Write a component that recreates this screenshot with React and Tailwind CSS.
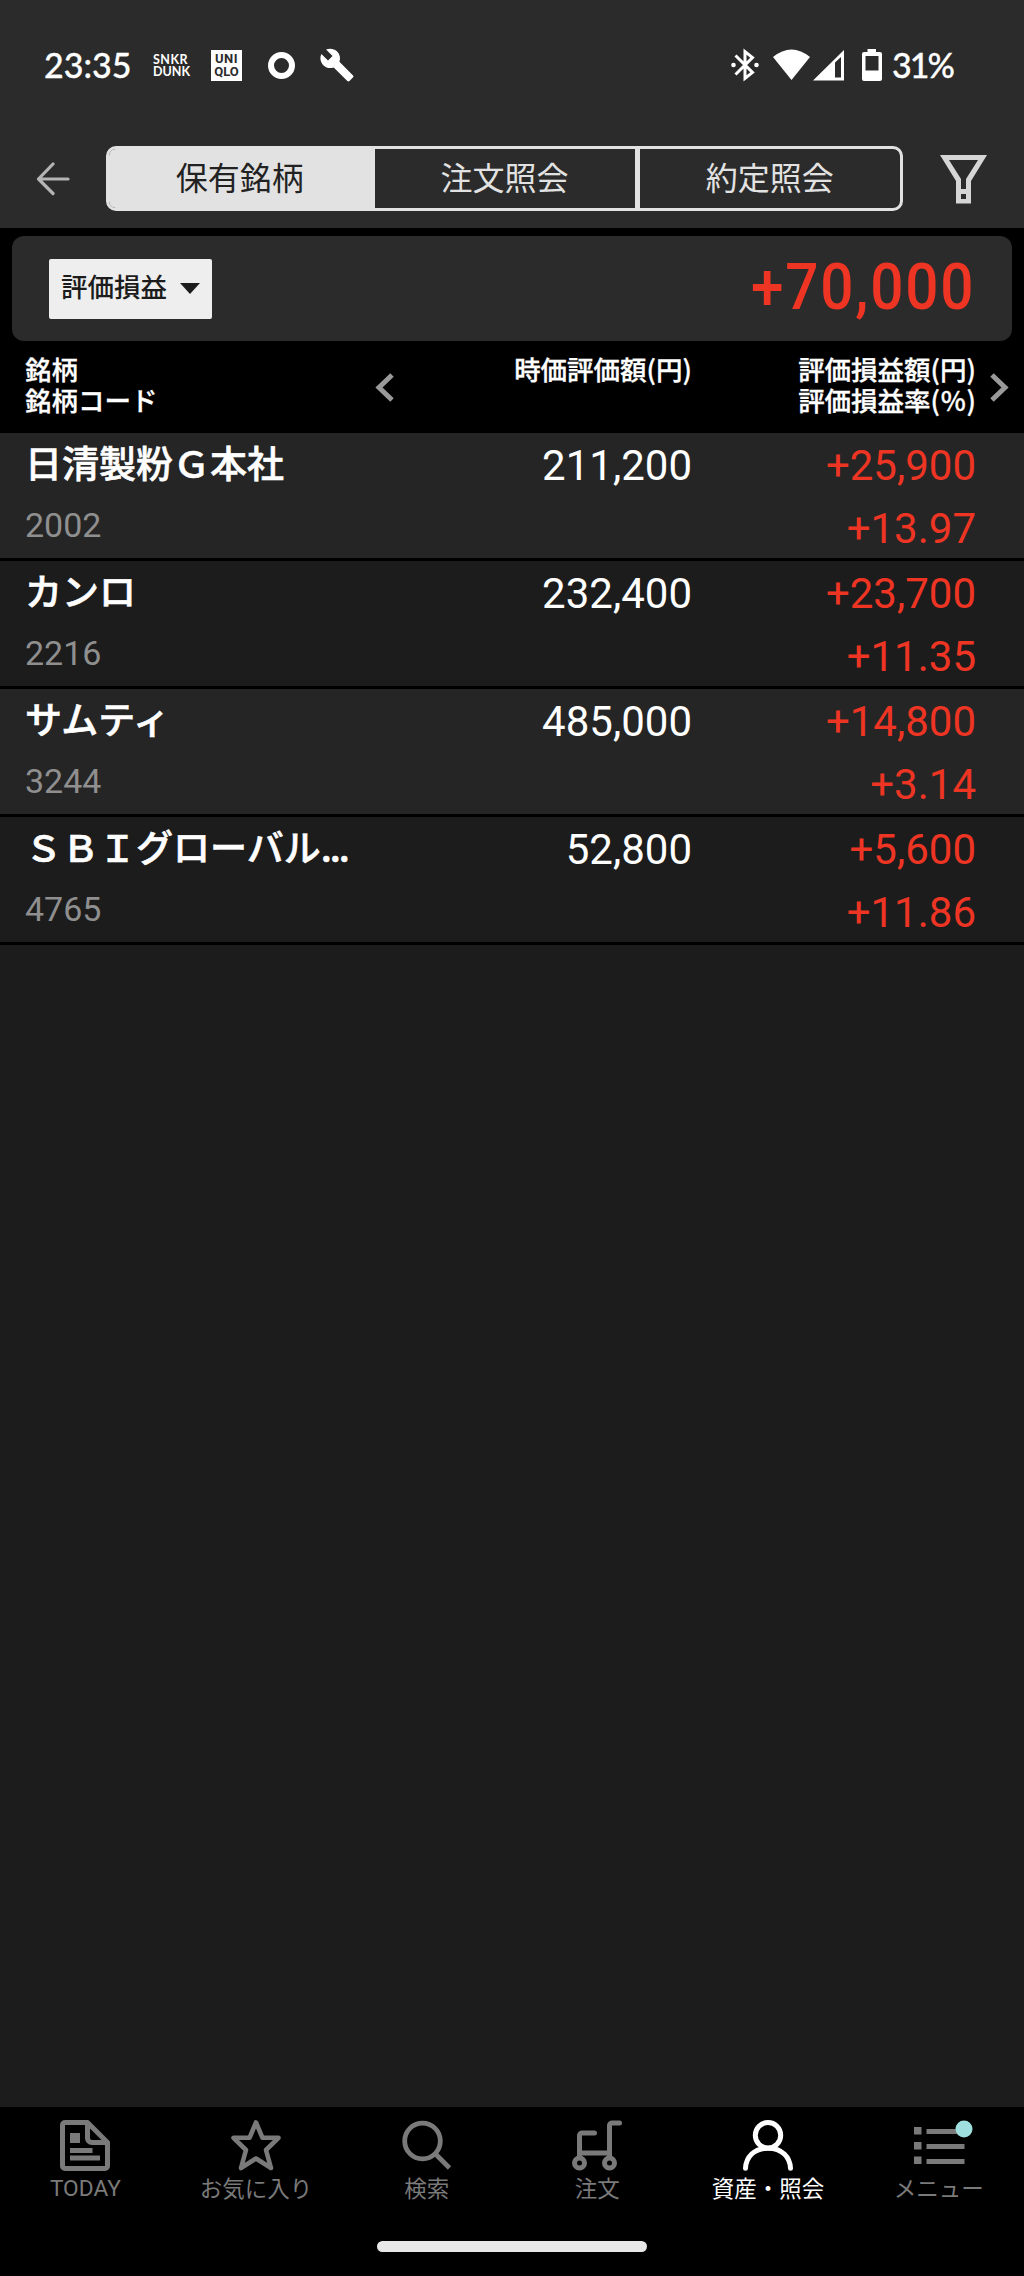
// App.jsx - 保有銘柄一覧
const holdings = [
  { name: "日清製粉Ｇ本社", code: "2002", value: "211,200", profit: "+25,900", rate: "+13.97" },
  { name: "カンロ", code: "2216", value: "232,400", profit: "+23,700", rate: "+11.35" },
  { name: "サムティ", code: "3244", value: "485,000", profit: "+14,800", rate: "+3.14" },
  { name: "ＳＢＩグローバル", more: true, code: "4765", value: "52,800", profit: "+5,600", rate: "+11.86" },
];

const tabs = [
  { label: "保有銘柄", className: "w-[265.5px] bg-[#e2e2e2] pr-1 text-[#222]" },
  { label: "注文照会", className: "w-[260px] text-[#e2e2e2]" },
  { label: "約定照会", className: "flex-1 border-l-[5px] border-[#e2e2e2] text-[#e2e2e2]" },
];

const TodayIcon = () => (
  <svg width="50" height="51" viewBox="0 0 50 51" fill="none" stroke="currentColor" strokeWidth="5" strokeLinejoin="round">
    <path d="M5 2.5H27.5L47.5 22.5V46A2.5 2.5 0 0 1 45 48.5H5A2.5 2.5 0 0 1 2.5 46V5A2.5 2.5 0 0 1 5 2.5Z" />
    <path d="M27.5 2.5V18A4.5 4.5 0 0 0 32 22.5H47.5" />
    <path d="M10 13h10v10H10zM10 28h22.5v5H10zM10 35.5h30v5H10z" fill="currentColor" stroke="none" />
  </svg>
);

const StarIcon = () => (
  <svg width="50" height="51" viewBox="0 0 50 51" fill="none" stroke="currentColor" strokeWidth="4.6" strokeLinejoin="round">
    <path d="M25 2.5L31.5 17.8H47.5L35 30L40 48L25 38.5L10 48L15 30L2.5 17.8H18.5Z" />
  </svg>
);

const SearchIcon = () => (
  <svg width="50" height="51" viewBox="0 0 50 51" fill="none" stroke="currentColor" strokeWidth="4.8">
    <circle cx="20.5" cy="21" r="17.8" />
    <path d="M33 33.5L47.5 48" />
  </svg>
);

const CartIcon = () => (
  <svg width="50" height="51" viewBox="0 0 50 51" fill="none" stroke="currentColor" strokeWidth="5" strokeLinecap="round">
    <path d="M22.5 13H10A2.5 2.5 0 0 0 7.5 15.5V37M47.5 3H40A2.5 2.5 0 0 0 37.5 5.5V37M7.5 33H37.5" />
    <circle cx="7.5" cy="43" r="5" />
    <circle cx="37.5" cy="43" r="5" />
  </svg>
);

const PersonIcon = () => (
  <svg width="50" height="51" viewBox="0 0 50 51" fill="none" stroke="currentColor" strokeWidth="5" strokeLinecap="round">
    <circle cx="25" cy="15.3" r="12.7" />
    <path d="M2.5 48.3C3 37 11 28.2 25 28.2S47 37 47.5 48.3" />
  </svg>
);

const MenuIcon = () => (
  <svg width="50" height="51" viewBox="0 0 50 51" fill="currentColor" className="overflow-visible">
    <path d="M0 7h7.500v7.500H0zM0 22h7.500v7.500H0zM0 36.500h7.500v7.500H0zM12.500 9h38v5h-38zM12.500 24h38v5h-38zM12.500 39h38v5h-38z" />
    <circle cx="50" cy="9" r="8.500" fill="#9fdfe0" />
  </svg>
);

const navItems = [
  { label: "TODAY", Icon: TodayIcon, latin: true },
  { label: "お気に入り", Icon: StarIcon },
  { label: "検索", Icon: SearchIcon },
  { label: "注文", Icon: CartIcon },
  { label: "資産・照会", Icon: PersonIcon, active: true },
  { label: "メニュー", Icon: MenuIcon },
];

const StatusBar = () => (
  <div className="flex h-[130px] items-center text-white">
    <div className="ml-[44px] w-[109px] font-['Lato'] text-[34px] font-medium leading-none [-webkit-text-stroke:0.3px]">23:35</div>
    <div className="w-[58px] pt-[2px] font-['Lato'] text-[12.5px] font-bold leading-[12.5px]">
      <div className="tracking-[0.5px]">SNKR</div>
      <div>DUNK</div>
    </div>
    <div className="flex h-[31px] w-[31px] flex-col items-center justify-center bg-white font-['Roboto'] text-[13px] font-bold leading-[13px] text-[#2b2b2b]">
      <div className="tracking-[0.5px]">UNI</div>
      <div>QLO</div>
    </div>
    <div className="ml-[26px] h-[27px] w-[27px] rounded-full border-[6px] border-white" />
    <svg className="ml-[24px]" width="36" height="36" viewBox="0 0 24 24" fill="currentColor">
      <path d="M22.7 19l-9.1-9.1c.9-2.3.4-5-1.5-6.9-2-2-5-2.4-7.4-1.3L9 6 6 9 1.6 4.7C.4 7.1.9 10.1 2.900 12.1c1.900 1.900 4.600 2.400 6.900 1.500l9.100 9.100c.4.4 1 .4 1.400 0l2.300-2.300c.5-.4.5-1.100.1-1.400z" />
    </svg>
    <div className="ml-auto flex w-[293px] items-center">
      <svg width="28" height="34" viewBox="0 0 28 34" fill="none" stroke="currentColor" strokeWidth="3">
        <path d="M4.500 7.500L21.500 24.500L14 30.500V3.500L21.500 9.500L4.500 26.500" />
        <circle cx="2.500" cy="17" r="2.300" fill="currentColor" stroke="none" />
        <circle cx="25.500" cy="17" r="2.300" fill="currentColor" stroke="none" />
      </svg>
      <svg className="ml-[14px]" width="72" height="32" viewBox="0 0 72 32" fill="currentColor">
        <path d="M0 8Q18.500 -7 37 8L18.500 31Z" />
        <path fillRule="evenodd" d="M40 31.500L71 1V31.500ZM62 13.500V28.500H68V8Z" />
      </svg>
      <svg className="ml-[17px]" width="20" height="34" viewBox="0 0 20 34" fill="currentColor">
        <path fillRule="evenodd" d="M5.500 1H14V4H18A2 2 0 0 1 20 6V31A2 2 0 0 1 18 33H2A2 2 0 0 1 0 31V6A2 2 0 0 1 2 4H5.500ZM3.500 8V22.500H16.500V8Z" />
      </svg>
      <span className="ml-[10px] font-['Lato'] text-[34px] font-medium leading-none tracking-[-2px] [-webkit-text-stroke:0.3px]">31%</span>
    </div>
  </div>
);

const Tabs = () => (
  <div className="flex h-[98px] items-start pt-4">
    <svg className="ml-9 mt-[16px]" width="34" height="34" viewBox="0 0 34 34" fill="none" stroke="#b4b4b4" strokeWidth="3.2" strokeLinecap="round" strokeLinejoin="round">
      <path d="M17 2L2.500 17L17 31.500M2.500 17H32" />
    </svg>
    <div className="ml-9 flex h-[65px] w-[797px] overflow-hidden rounded-[10px] border-[3px] border-[#e2e2e2]">
      {tabs.map((tab) => (
        <div key={tab.label} className={`flex items-center justify-center pb-[5px] text-[32px] ${tab.className}`}>
          {tab.label}
        </div>
      ))}
    </div>
    <svg className="ml-[37px] mt-[9px]" width="47" height="49" viewBox="0 0 47 49">
      <path fill="#d6d6d6" fillRule="evenodd" d="M0 0H47L31 26V48.500H16V26ZM9 5L21 24V34H26V24L38 5ZM21 39V44H26V39Z" />
    </svg>
  </div>
);

const Summary = () => (
  <div className="mx-3 flex h-[105px] items-center justify-between rounded-xl bg-[#2b2b2b] pl-[37px] pr-[37px]">
    <button className="flex h-[60px] w-[163px] items-center rounded-xs bg-[#eee] pl-3 text-[26.5px] font-medium text-[#1c1c1c]">
      <span className="pb-[5px]">評価損益</span>
      <svg className="ml-[13px]" width="20" height="11" viewBox="0 0 20 11">
        <path d="M0 0H20L10 11Z" fill="#1c1c1c" />
      </svg>
    </button>
    <span className="origin-right scale-x-[0.9] pb-[2px] font-['Roboto'] text-[65px] font-medium leading-none tracking-[2px] text-[#ee3524]">
      +70,000
    </span>
  </div>
);

const ColumnHeader = () => (
  <div className="flex h-[92px] pt-3 text-[26.5px] font-medium leading-[31px] text-white [-webkit-text-stroke:0.3px]">
    <div className="w-[375px] pl-[25px]">
      銘柄
      <br />
      銘柄コード
    </div>
    <svg className="mt-[20px]" width="19" height="29" viewBox="0 0 19 29" fill="none" stroke="#9a9a9a" strokeWidth="5">
      <path d="M17 2L4 14.500L17 27" />
    </svg>
    <div className="w-[298px] text-right">時価評価額(円)</div>
    <div className="w-[284px] text-right">
      評価損益額(円)
      <br />
      評価損益率(％)
    </div>
    <svg className="ml-[14px] mt-[20px]" width="19" height="29" viewBox="0 0 19 29" fill="none" stroke="#9a9a9a" strokeWidth="5">
      <path d="M2 2L15 14.500L2 27" />
    </svg>
  </div>
);

const HoldingRow = ({ item }) => (
  <div className="flex h-32 border-b-[3px] border-black text-[42px] odd:bg-[#252525] even:bg-[#1c1c1c]">
    <div className="w-[375px] pl-[25px]">
      <div className="h-[62px] whitespace-nowrap text-[37px] font-medium leading-[59px] text-white [-webkit-text-stroke:0.6px]">
        {item.name}
        {item.more && <span className="tracking-[-2px]">...</span>}
      </div>
      <div className="font-['Roboto'] text-[34px] leading-[60px] text-[#8f8f8f]">{item.code}</div>
    </div>
    <div className="w-[317px] text-right font-['Roboto'] leading-[66px] text-white">{item.value}</div>
    <div className="w-[284px] text-right font-['Roboto'] leading-[63px] text-[#ee3524]">
      <div className="pt-[1px]">{item.profit}</div>
      <div>{item.rate}</div>
    </div>
  </div>
);

const BottomNav = () => (
  <div className="h-[169px] bg-black">
    <div className="flex h-[134px] pt-[13px]">
      {navItems.map(({ label, Icon, active, latin }) => (
        <div key={label} className={`flex flex-1 flex-col items-center ${active ? "text-white" : "text-[#7a7a7a]"}`}>
          <Icon />
          <span
            className={`whitespace-nowrap ${
              latin ? "font-['Roboto'] text-[22.7px] leading-[36px]" : "text-[22.5px] leading-[33px]"
            }`}
          >
            {label}
          </span>
        </div>
      ))}
    </div>
    <div className="mx-auto h-[11px] w-[270px] rounded-full bg-[#e8e8e8]" />
  </div>
);

export default function App() {
  return (
    <div className="flex h-[2276px] w-[1024px] flex-col overflow-hidden bg-[#1c1c1c] font-['Noto_Sans_CJK_JP',sans-serif]">
      <div className="bg-[#2b2b2b]">
        <StatusBar />
        <Tabs />
      </div>
      <div className="bg-black pt-2">
        <Summary />
        <ColumnHeader />
      </div>
      <div className="flex-1">
        {holdings.map((item) => (
          <HoldingRow key={item.code} item={item} />
        ))}
      </div>
      <BottomNav />
    </div>
  );
}
